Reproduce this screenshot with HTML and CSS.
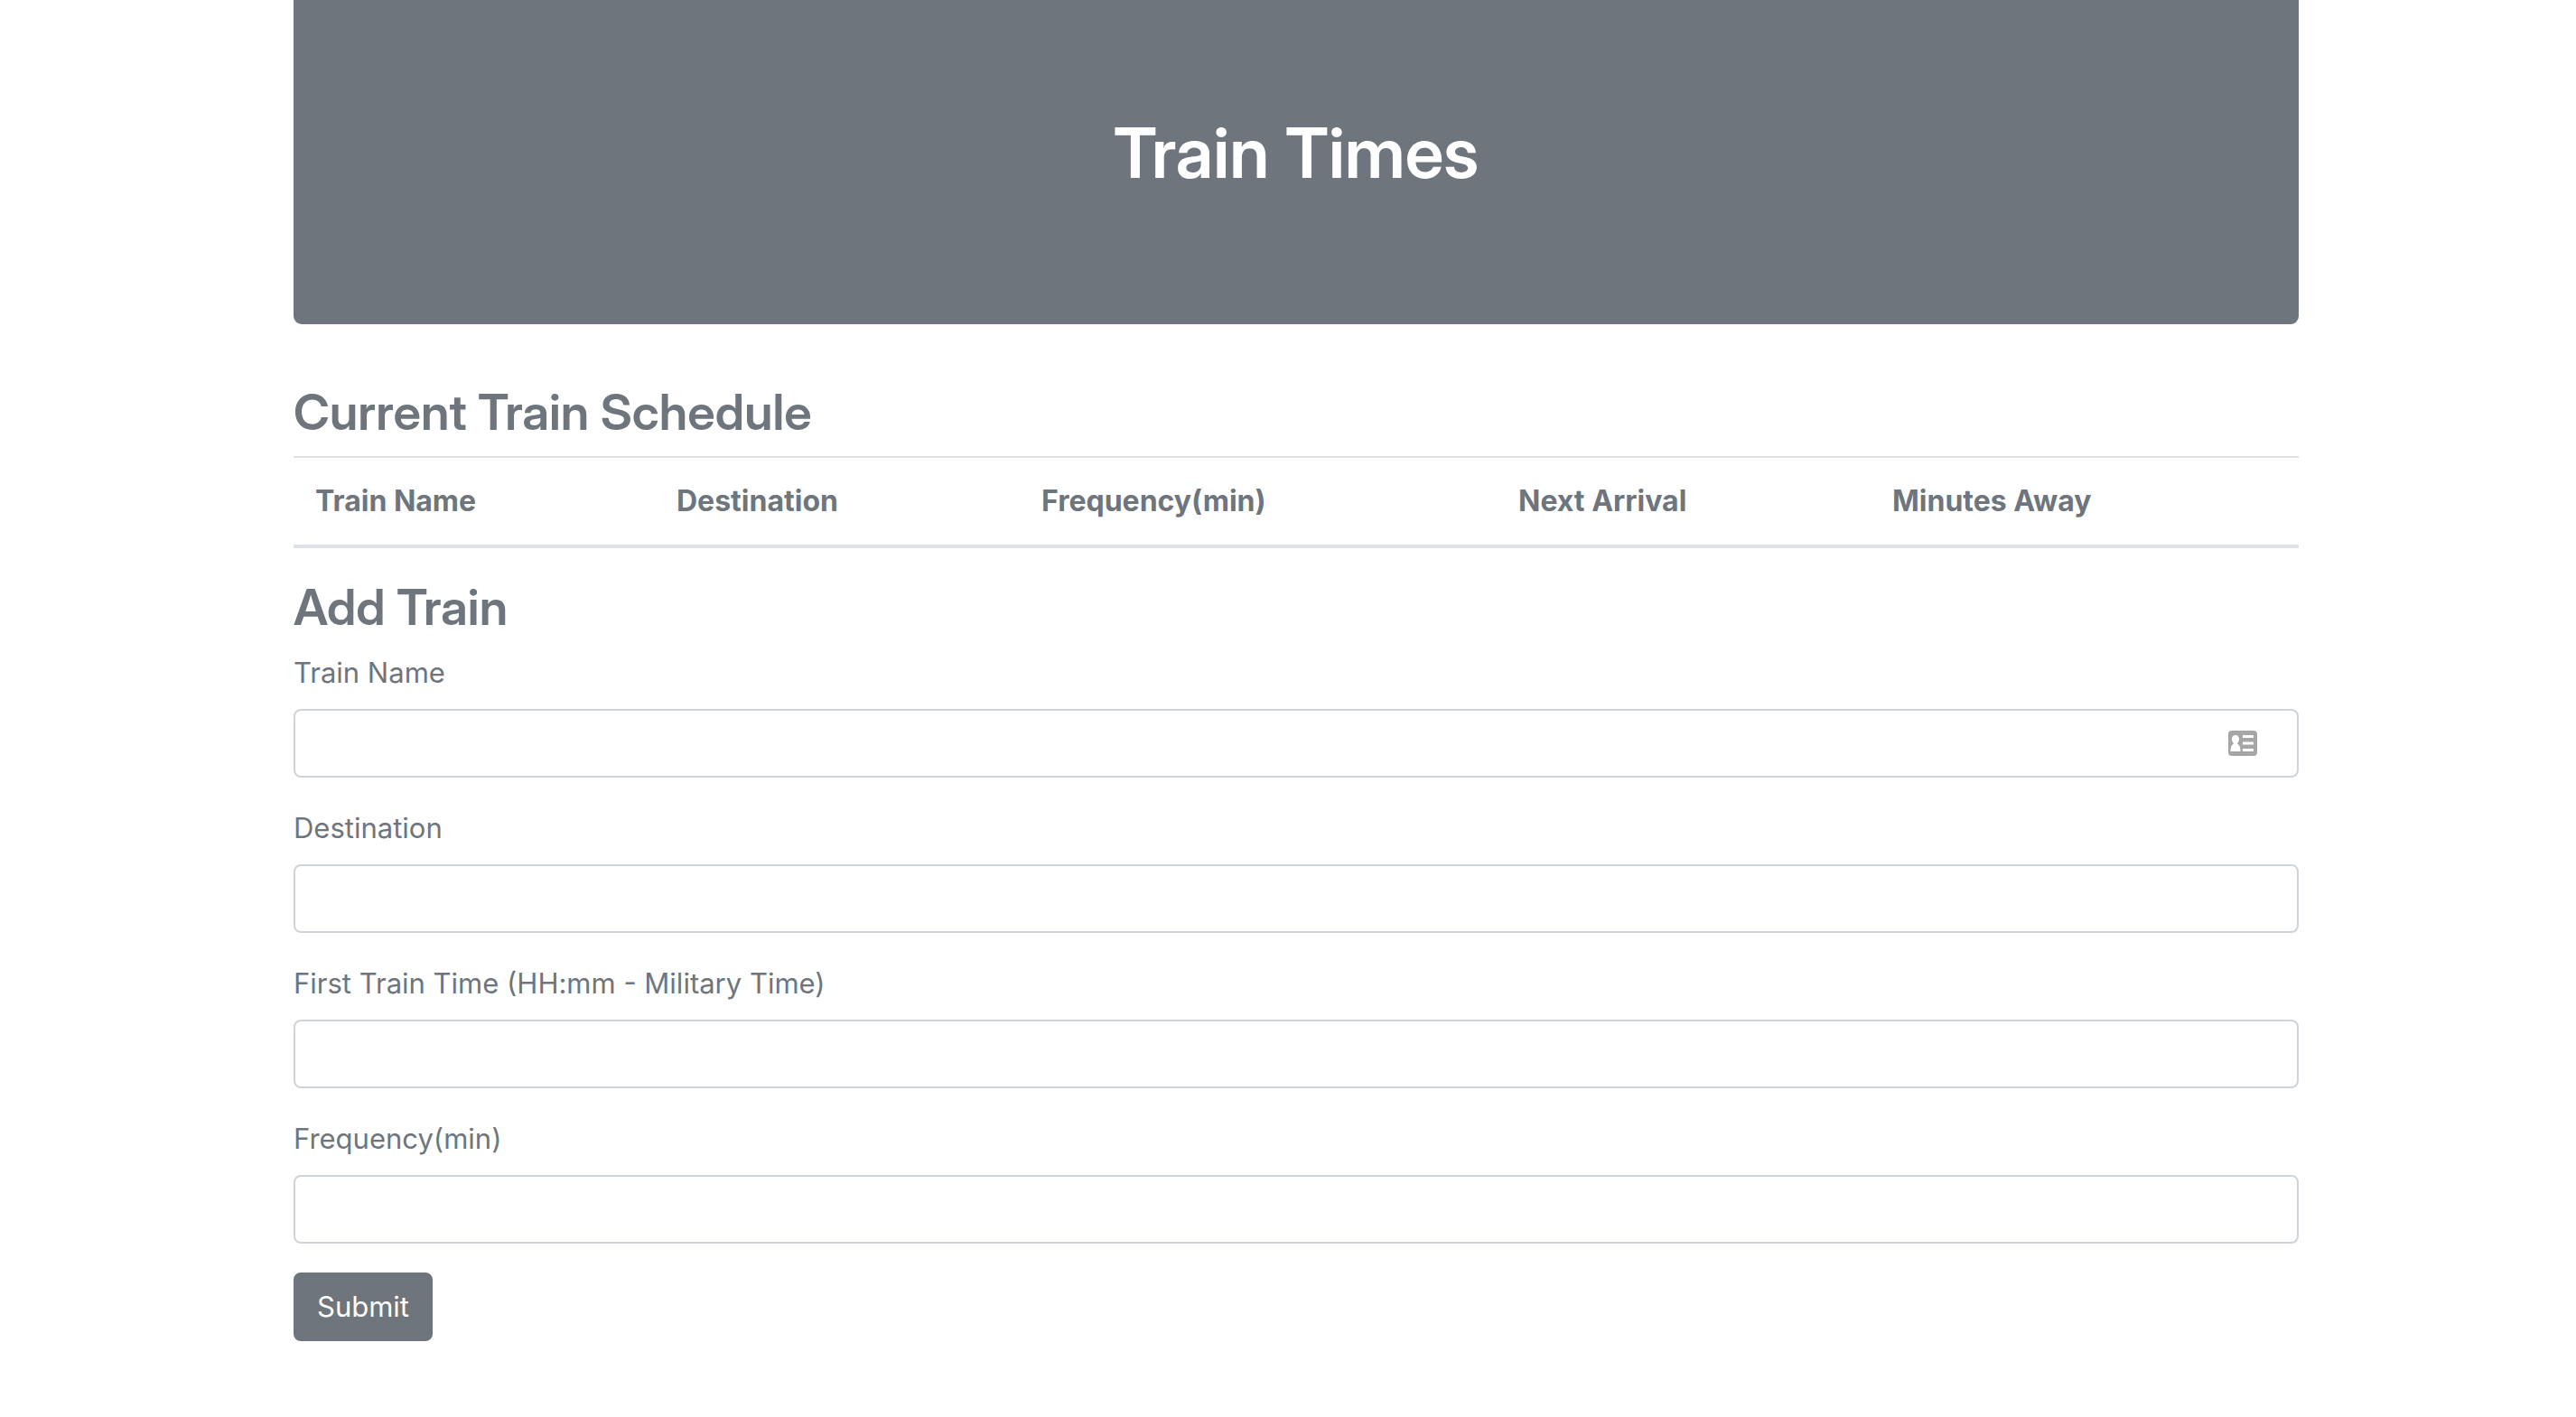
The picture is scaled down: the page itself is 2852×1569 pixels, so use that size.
FILE: index.html
```html
<!DOCTYPE html>
<html lang="en">
<head>
  <meta charset="utf-8">
  <meta name="viewport" content="width=device-width, initial-scale=1">
  <title>Train Times</title>
  <link rel="stylesheet" href="styles.css">
</head>
<body>
  <div class="container">
    <header class="jumbotron">
      <h1 class="title">Train Times</h1>
    </header>
    <main>
      <section>
        <h2 class="heading">Current Train Schedule</h2>
        <table class="schedule">
          <colgroup>
            <col class="col-name">
            <col class="col-destination">
            <col class="col-frequency">
            <col class="col-arrival">
            <col>
          </colgroup>
          <thead>
            <tr>
              <th scope="col">Train Name</th>
              <th scope="col">Destination</th>
              <th scope="col">Frequency(min)</th>
              <th scope="col">Next Arrival</th>
              <th scope="col">Minutes Away</th>
            </tr>
          </thead>
          <tbody></tbody>
        </table>
      </section>
      <section>
        <h2 class="heading">Add Train</h2>
        <form>
          <div class="group">
            <label for="train-name">Train Name</label>
            <div class="field">
              <input class="control" type="text" id="train-name">
              <svg class="contact-icon" viewBox="0 0 32 28" aria-hidden="true">
                <rect width="32" height="28" rx="4" fill="#a6a6a6"/>
                <path fill="#fff" d="M8 5a4 4 0 0 1 4 4.500c0 1.800-.7 3.200-1.700 4.200v1c2.100.9 3.200 3.600 3.200 8.300h-11c0-4.700 1.100-7.400 3.200-8.300v-1C4.700 12.700 4 11.300 4 9.500A4 4 0 0 1 8 5z"/>
                <path fill="#fff" d="M16 5h12v3H16zM16 12.500h12v3H16zM16 20h12v3H16z"/>
              </svg>
            </div>
          </div>
          <div class="group">
            <label for="destination">Destination</label>
            <input class="control" type="text" id="destination">
          </div>
          <div class="group">
            <label for="first-time">First Train Time (HH:mm - Military Time)</label>
            <input class="control" type="text" id="first-time">
          </div>
          <div class="group">
            <label for="frequency">Frequency(min)</label>
            <input class="control" type="text" id="frequency">
          </div>
          <button class="submit" type="submit">Submit</button>
        </form>
      </section>
    </main>
  </div>
</body>
</html>
```
FILE: styles.css
```css
* {
  box-sizing: border-box;
}

body {
  margin: 0;
  padding-left: 18px;
  background: #fff;
  color: #6e757d;
  font-family: Inter, "Liberation Sans", sans-serif;
  font-size: 31px;
  line-height: 48px;
}

.container {
  max-width: 2220px;
  margin: 0 auto;
}

.jumbotron {
  margin-bottom: 64px;
  padding: 121px 64px 142px;
  border-radius: 0 0 9px 9px;
  background: #6e757d;
  color: #fff;
  text-align: center;
}

.title,
.heading {
  font-family: "Inter Display", Inter, "Liberation Sans", sans-serif;
  font-variation-settings: "opsz" 32;
  font-weight: 560;
}

.title {
  margin: 0;
  font-size: 77px;
  line-height: 96px;
}

.heading {
  margin: 0 0 16px;
  font-size: 55px;
  line-height: 66px;
}

.schedule {
  width: 100%;
  margin-bottom: 32px;
  border-spacing: 0;
  text-align: left;
}

.col-name {
  width: 400px;
}

.col-destination {
  width: 404px;
}

.col-frequency {
  width: 528px;
}

.col-arrival {
  width: 414px;
}

.schedule th {
  padding: 24px;
  border-top: 2px solid #dee2e6;
  border-bottom: 4px solid #dee2e6;
  font-size: 32px;
  font-weight: 700;
}

.group {
  margin-bottom: 32px;
}

.group label {
  display: block;
  margin-bottom: 16px;
}

.field {
  position: relative;
}

.control {
  display: block;
  width: 100%;
  height: 76px;
  padding: 12px 24px;
  border: 2px solid #ced4da;
  border-radius: 8px;
  background: #fff;
  color: #495057;
  font: inherit;
}

.contact-icon {
  position: absolute;
  top: 24px;
  right: 46px;
  width: 32px;
  height: 28px;
}

.submit {
  display: block;
  padding: 12px 24px;
  border: 2px solid #6e757d;
  border-radius: 8px;
  background: #6e757d;
  color: #fff;
  font: inherit;
}
```
